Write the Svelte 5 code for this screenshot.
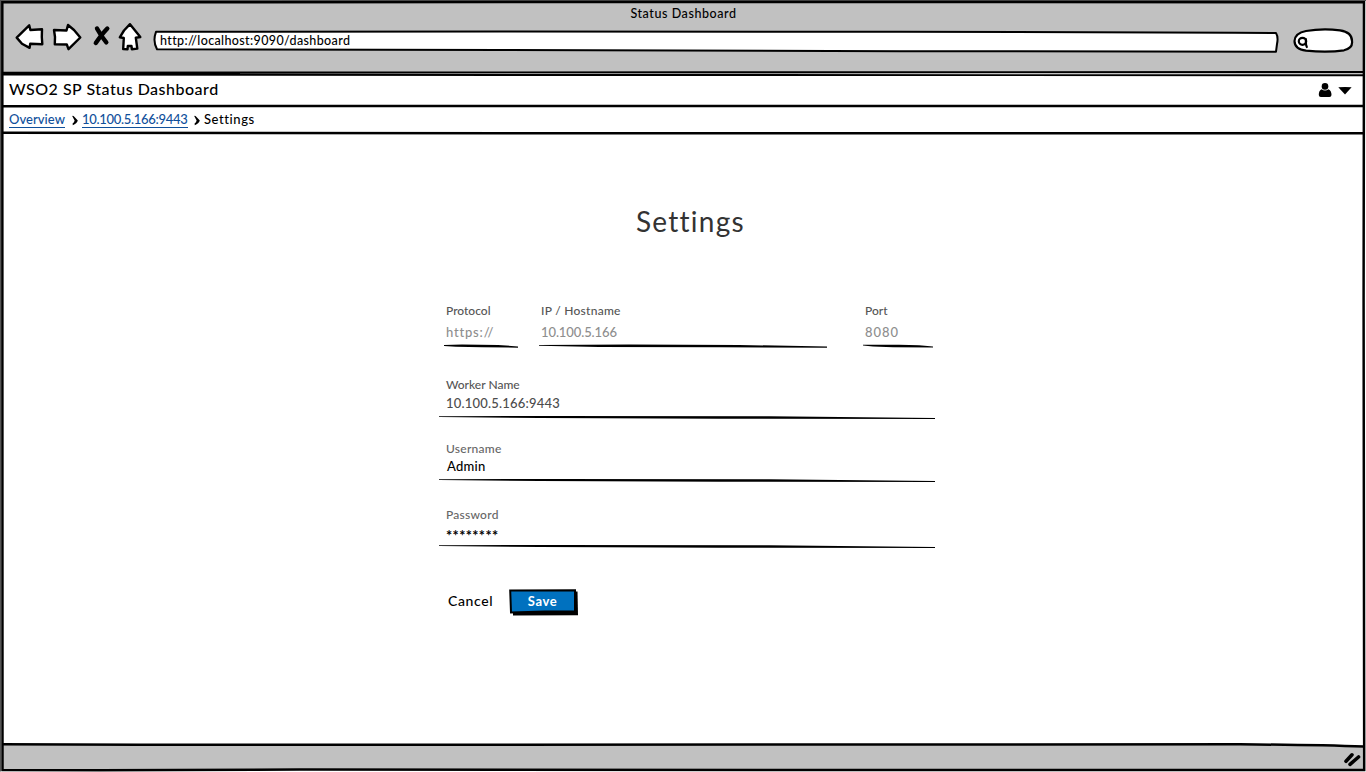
<script>
  const endpoint = [
    { label: 'Protocol', value: 'https://', width: 74, gap: 0, vls: 0.8, ls: 0, rule: 'M0 1 L18 .6 L54 .9 L74 2.4 L74 3.7 L38 3.3 L12 2.7 L0 1.9 Z' },
    { label: 'IP / Hostname', value: '10.100.5.166', width: 288, gap: 21, vls: -0.1, ls: 0.27, rule: 'M0 .9 L90 .6 L200 1 L288 2.4 L288 3.7 L180 3.3 L60 2.9 L0 1.8 Z' },
    { label: 'Port', value: '8080', width: 70, gap: 36, vls: 1, ls: 0, rule: 'M0 .8 L36 .7 L56 1.2 L70 2.5 L70 3.6 L30 3.3 L10 2.5 L0 1.5 Z' }
  ];
  const account = [
    { label: 'Worker Name', value: '10.100.5.166:9443', kind: 'muted' },
    { label: 'Username', value: 'Admin', kind: 'plain' },
    { label: 'Password', value: '********', kind: 'secret' }
  ];
</script>

<div class="browser">
  <header class="chrome">
    <div class="title">Status Dashboard</div>
    <div class="toolbar">
      <svg class="nav" width="130" height="34" viewBox="14 20 130 34" fill="#fff" stroke="#000" stroke-width="2.4" stroke-linejoin="round" stroke-linecap="round">
        <path d="M16.7 37.6 L29.2 25.3 L30.4 30 L42 29.3 L41.8 37 L42.3 44.2 L30.2 43.8 L29.6 47.9 L22 43.8 Z" />
        <path d="M54 30 L66.5 30.5 L68 25 L74 30 L80.3 37.5 L68.5 49.2 L66.8 44.5 L54.8 44.3 L55 37 Z" />
        <path d="M130 24.2 L140.3 37 L135.8 37.7 L137.3 48.6 L131.8 49.2 L131.5 46 L127.8 46 L127.5 49.3 L123.2 49 L123.8 38 L119.8 37.3 L124 30.5 Z" />
        <path d="M97 28.5 Q101 36 106.3 42.3 M107.3 28.5 Q102 34 95.8 43" fill="none" stroke-width="4.4" />
      </svg>
      <div class="address">
        <svg width="1128" height="24" viewBox="152 29 1128 24" fill="#fff" stroke="#000" stroke-width="2" stroke-linejoin="round">
          <path d="M156 31.8 L500 31.6 L900 31.7 L1235 32.8 L1276 33 Q1278.5 37 1277 44 L1276 51.7 L900 51.2 L500 50 L157 49.3 Q152.5 41 156 31.8 Z" />
        </svg>
        <span>http://localhost:9090/dashboard</span>
      </div>
      <svg class="search" width="62" height="28" viewBox="1292 27 62 28" fill="#fff" stroke="#000" stroke-width="2.2" stroke-linecap="round">
        <path d="M1306 31 Q1322 28.3 1340 30.3 Q1352 32 1352 41 Q1353 48 1344 50.3 Q1328 52.8 1306 50.7 Q1294.5 49 1294.5 41 Q1295 33 1306 31 Z" />
        <ellipse cx="1302.5" cy="41.3" rx="3.7" ry="3.5" fill="none" />
        <path d="M1305.8 39 L1306 44.5 L1306.8 47" fill="none" />
      </svg>
    </div>
  </header>

  <div class="appbar">
    <span class="brand">WSO2 SP Status Dashboard</span>
    <svg width="34" height="16" viewBox="1318 82 34 16">
      <circle cx="1325" cy="86.4" r="3.3" />
      <path d="M1321.5 89.2 Q1325 92 1328.6 89.2 Q1331.6 91 1331.5 95 Q1331.3 97 1329.5 97 H1320.8 Q1318.9 97 1318.8 95 Q1318.6 91 1321.5 89.2 Z" />
      <path d="M1338.3 87.3 Q1345 86.6 1351.6 87.3 L1345 94.4 Z" />
    </svg>
  </div>

  <nav class="crumbs">
    <span class="link overview">Overview</span>
    <svg width="6" height="12" viewBox="0 0 6 12"><path d="M.2 2 Q1.2 1.5 1.8 2.2 L5.8 6.6 Q4.8 9.9 .8 11.2 L.6 9.6 Q2.3 8.6 2.6 6.6 Z" /></svg>
    <span class="link address-link">10.100.5.166:9443</span>
    <svg width="6" height="12" viewBox="0 0 6 12"><path d="M.2 2 Q1.2 1.5 1.8 2.2 L5.8 6.6 Q4.8 9.9 .8 11.2 L.6 9.6 Q2.3 8.6 2.6 6.6 Z" /></svg>
    <span class="here">Settings</span>
  </nav>

  <main>
    <h1>Settings</h1>
    <form>
      <div class="endpoint">
        {#each endpoint as f}
          <div class="field" style="width: {f.width}px; margin-left: {f.gap}px">
            <span class="label" style="letter-spacing: {f.ls}px">{f.label}</span>
            <span class="value" style="letter-spacing: {f.vls}px">{f.value}</span>
            <svg width={f.width} height="4"><path d={f.rule} /></svg>
          </div>
        {/each}
      </div>
      {#each account as f}
        <div class="row {f.kind}">
          <span class="label">{f.label}</span>
          <span class="value">{f.value}</span>
          <svg width="496" height="4"><path d="M0 .2 L120 0 L330 .3 L496 1.9 L496 3 L280 2.8 L100 2 L0 1.1 Z" /></svg>
        </div>
      {/each}
      <div class="actions">
        <span class="cancel">Cancel</span>
        <button type="button">
          <svg width="70" height="28" viewBox="508 588 70 28">
            <path d="M513 592 L577.5 591.5 L578 615.3 L513 615.5 Z" />
            <path d="M510.2 590.5 L575 590.2 L575 611.5 L545 611.6 L511 612.4 Z" fill="#0071bf" stroke="#000" stroke-width="2" />
          </svg>
          <span>Save</span>
        </button>
      </div>
    </form>
  </main>

  <footer>
    <svg width="1361" height="27" viewBox="3 743 1361 27"><path d="M3 744.3 L1240 744.3 Q1320 745 1364 746.6 V770 H3 Z" fill="#c1c1c1" /></svg>
  </footer>

  <svg class="frame" width="1366" height="772" fill="none" stroke="#000" stroke-width="2.5">
    <path d="M.5 771.5 V0 M0 .5 H1366" stroke="#555" stroke-width="1" />
    <path d="M2.3 2.3 L700 1.9 L1364 2.3 L1363.6 300 L1364.2 769.9 L800 770 L300 769.6 L100 770.2 L2.5 769.9 Z" />
    <path d="M2 72.7 L700 72.3 L1364 72 M2 74.6 L600 75 L1364 75.3" stroke-width="1.9" />
    <path d="M2 73.7 L240 73.7" stroke-width="2" />
    <path d="M2 106.2 L600 106 L1364 106.1 M2 132.7 L700 133.3 L1364 133.2" />
    <path d="M2 744.3 L140 744.8 L1240 744.3 Q1320 745 1364 746.6" />
    <path d="M1346 761.3 L1352 754.8 M1350 764.3 L1358.5 757" stroke-width="3.6" stroke-linecap="round" />
  </svg>
</div>

<style>
  :global(body) { margin: 0; background: #fff; overflow: hidden; }
  .browser {
    position: relative; display: flex; flex-direction: column;
    width: 1366px; height: 772px; box-sizing: border-box;
    padding: 2px 2px 2px 3px; background: #fff; color: #000;
    font-family: Lato, 'Liberation Sans', sans-serif; font-weight: 500;
  }
  svg { display: block; flex: none; }
  span { white-space: nowrap; }
  .frame { position: absolute; left: 0; top: 0; pointer-events: none; }
  .chrome { height: 72px; background: #c1c1c1; display: flex; flex-direction: column; }
  .title { height: 18px; padding-top: 4px; box-sizing: border-box; font-size: 12.5px; line-height: 16px; text-align: center; letter-spacing: .57px; }
  .toolbar { display: flex; align-items: flex-start; padding-left: 11px; }
  .address { display: grid; margin: 9px 12px 0 8px; }
  .address > * { grid-area: 1 / 1; }
  .address span { padding-left: 8px; line-height: 23px; font-size: 12.5px; letter-spacing: .37px; }
  .search { margin-top: 7px; }
  .appbar { height: 32px; display: flex; align-items: center; justify-content: space-between; padding: 0 12px 0 6px; }
  .brand { font-size: 16px; letter-spacing: .5px; padding-bottom: 3px; }
  .crumbs { height: 27px; display: flex; align-items: center; padding-left: 6px; font-size: 13px; }
  .link { color: #10509b; border-bottom: 1px solid #10509b; line-height: 15px; }
  .overview { width: 56px; margin-right: 7px; letter-spacing: .05px; }
  .address-link { width: 106px; margin: 0 6px 0 4px; letter-spacing: -.3px; }
  .here { margin-left: 4px; letter-spacing: .57px; padding-bottom: 1px; }
  main { flex: 1; padding-top: 68px; }
  h1 { margin: 0 0 0 633px; font-size: 28px; line-height: 40px; font-weight: 400; color: #333; letter-spacing: 1.25px; }
  form { margin: 62px 0 0 436px; width: 496px; }
  .endpoint { display: flex; padding-left: 5px; height: 74px; }
  .field, .row { display: flex; flex-direction: column; }
  .field .label, .field .value { padding-left: 2px; }
  .label { font-size: 12px; line-height: 16px; color: #555; letter-spacing: 0; }
  .value { font-size: 13px; line-height: 18px; }
  .field .value { color: #8e8e8e; margin: 4px 0 3px; }
  .row { height: 64px; }
  .row .label, .row .value { padding-left: 7px; }
  .row .value { margin: 1px 0 4px; color: #4c4c4c; letter-spacing: .2px; }
  .row.plain { height: 66px; }
  .row.plain .value { color: #000; margin: 0 0 4px; letter-spacing: .25px; padding-left: 8px; }
  .secret .label, .plain .label { color: #666; letter-spacing: .25px; }
  .row.secret .value { color: #000; margin: 4px 0 0; font-size: 14.5px; letter-spacing: .4px; font-weight: 700; }
  .actions { display: flex; align-items: center; margin: 17px 0 0 9px; height: 28px; font-size: 14px; }
  .cancel { width: 61px; letter-spacing: .6px; padding-bottom: 3px; box-sizing: border-box; }
  button { display: grid; padding: 0; border: 0; background: none; font: inherit; margin-left: -1px; }
  button > * { grid-area: 1 / 1; }
  button span { position: relative; color: #fff; font-size: 13px; font-weight: 700; line-height: 27px; letter-spacing: .6px; padding-right: 1px; }
  footer { height: 27px; }
</style>
